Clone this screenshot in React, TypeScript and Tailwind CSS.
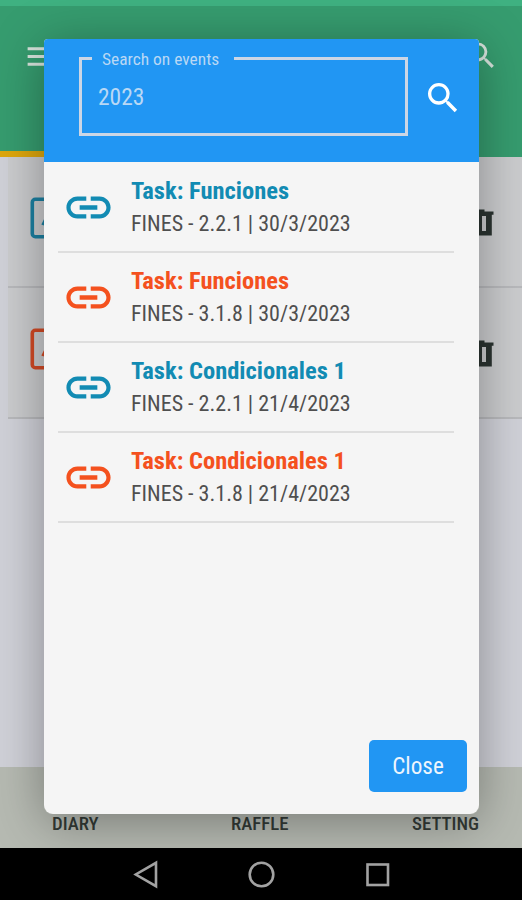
import React, { useState } from 'react';
import { MdLink, MdMenu, MdSearch } from 'react-icons/md';

type EventItem = {
  title: string;
  detail: string;
  color: string;
};

const BLUE = 'text-[#128bb3]';
const ORANGE = 'text-[#f4511e]';

const events: EventItem[] = [
  { title: 'Task: Funciones', detail: 'FINES - 2.2.1 | 30/3/2023', color: BLUE },
  { title: 'Task: Funciones', detail: 'FINES - 3.1.8 | 30/3/2023', color: ORANGE },
  { title: 'Task: Condicionales 1', detail: 'FINES - 2.2.1 | 21/4/2023', color: BLUE },
  { title: 'Task: Condicionales 1', detail: 'FINES - 3.1.8 | 21/4/2023', color: ORANGE },
];

const diaryColors = ['text-[#1c80a2]', 'text-[#d34a25]'];

const NoteIcon = ({ className }: { className: string }) => (
  <svg className={className} width="42" height="42" viewBox="0 0 42 42" fill="none" stroke="currentColor" strokeWidth="3.6">
    <rect x="2.3" y="2.3" width="37.4" height="37.4" rx="3" />
    <path d="M12.5 28 L15 23 L21 28 L30 17" strokeWidth="2.6" />
  </svg>
);

const TrashIcon = () => (
  <svg width="28" height="28" viewBox="0 0 28 28" fill="#2b3431">
    <path d="M9 1.5H18.5V3.5H27.5V6.8H25.8V27.5H2.2V6.8H0.5V3.5H9Z M8 8V23H12V8Z M16 8V23H20V8Z" fillRule="evenodd" />
  </svg>
);

const SearchDialog = () => {
  const [query, setQuery] = useState('2023');

  return (
    <div className="absolute left-[44px] top-[39px] flex h-[775px] w-[435px] flex-col overflow-hidden rounded-t-[4px] rounded-b-[9px] bg-[#f5f5f5]">
      {/* Search header */}
      <div className="flex h-[123px] shrink-0 items-start bg-[#2196f3] pl-[35px] pt-[9px]">
        <fieldset className="h-[88px] w-[329px] border-[3px] border-[#ccd6e5] pl-[10px]">
          <legend className="h-[21px] w-[142px] whitespace-nowrap pl-[10px] text-[17.4px] leading-[22px] text-[#b9d8f5]">
            Search on events
          </legend>
          <input
            value={query}
            onChange={(e) => setQuery(e.target.value)}
            className="mt-[10px] h-[36px] w-[290px] bg-transparent pl-[6px] text-[23.5px] text-[#b9d8f5] outline-none"
          />
        </fieldset>
        <button className="ml-[15px] mt-[30px] text-white">
          <MdSearch size={40} />
        </button>
      </div>

      {/* Results */}
      <ul className="flex-1 pl-[14px] pt-[1px]">
        {events.map((event, i) => (
          <li key={i} className="flex h-[90px] w-[396px] items-center border-b-2 border-[#dedede]">
            <MdLink size={53} className={`ml-[4px] mt-[1px] shrink-0 ${event.color}`} />
            <div className="ml-[16px] whitespace-nowrap pt-[1px]">
              <p className={`text-[24.5px] font-bold leading-[32px] ${event.color}`}>{event.title}</p>
              <p className="text-[22px] leading-[33px] text-[#4f4f4f]">{event.detail}</p>
            </div>
          </li>
        ))}
      </ul>

      <div className="flex justify-end pb-[22px] pr-[12px]">
        <button className="h-[52px] w-[98px] rounded-[5px] bg-[#2196f3] text-[23.2px] text-[#edf5fd]">Close</button>
      </div>
    </div>
  );
};

export default function App() {
  return (
    <div className="relative flex h-[900px] w-[522px] flex-col overflow-hidden bg-[#d0d1d8] font-['Roboto_Condensed','Roboto','Liberation_Sans',sans-serif] font-stretch-condensed">
      <div className="h-[6px] shrink-0 bg-[#3fb181]" />
      <header className="flex h-[151px] shrink-0 flex-col bg-[#369c6f]">
        <div className="flex flex-1 items-start justify-between pl-[23px] pr-[23px] pt-[32px] text-[#d7e3dc]">
          <MdMenu size={37} />
          <MdSearch size={35} />
        </div>
        <div className="h-[6px] w-1/3 bg-[#dea70c]" />
      </header>

      {/* Diary entries behind the dialog */}
      <main className="flex-1 pl-[8px]">
        {diaryColors.map((color) => (
          <div key={color} className="flex h-[131px] items-center justify-between border-b-2 border-[#b8b9bc] bg-[#cbccce] pl-[22px] pr-[28px]">
            <NoteIcon className={`-mt-[8px] ${color}`} />
            <TrashIcon />
          </div>
        ))}
      </main>

      <nav className="flex h-[81px] shrink-0 items-end bg-[#b6bab2] pb-[10px] pl-[52px] text-[18.8px] font-medium text-[#333a36]">
        <span className="w-[179px]">DIARY</span>
        <span className="w-[181px]">RAFFLE</span>
        <span>SETTING</span>
      </nav>

      {/* Android navigation */}
      <div className="flex h-[52px] shrink-0 items-center justify-center bg-black">
        <svg width="260" height="32" viewBox="0 0 260 32" fill="none" stroke="#a3a3a3" strokeWidth="2.6">
          <path d="M25 4.8V28.2L4.8 16.5Z" />
          <circle cx="130.5" cy="16.5" r="11.8" />
          <rect x="236.5" y="6.5" width="20.5" height="20.5" />
        </svg>
      </div>

      <div className="absolute left-[44px] top-[39px] h-[775px] w-[435px] rounded-[8px] shadow-[0_8px_50px_rgba(0,0,0,0.35)]" />
      <SearchDialog />
    </div>
  );
}
